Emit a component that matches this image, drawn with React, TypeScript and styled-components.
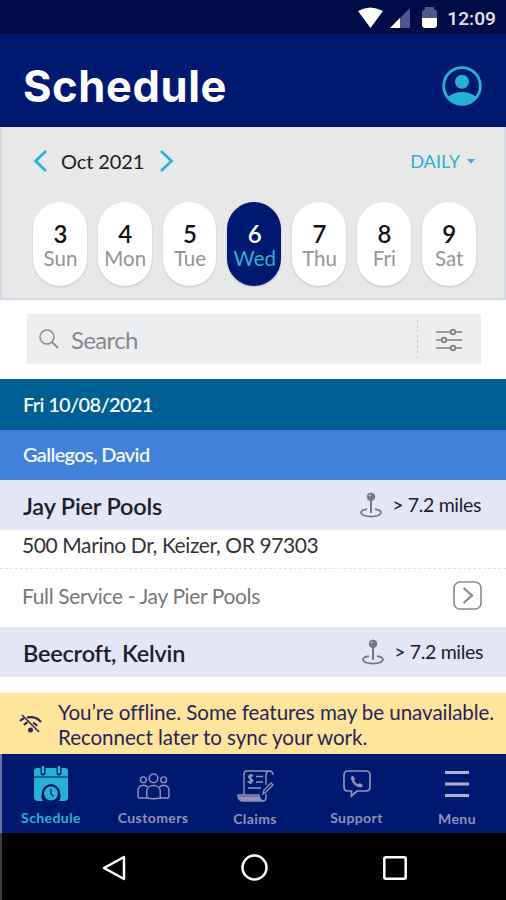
import React from "react";
import styled, { createGlobalStyle } from "styled-components";

const navy = "#001970";
const cyan = "#27b2d4";
const muted = "#9293b5";

const GlobalStyle = createGlobalStyle`
  * { box-sizing: border-box; }
  body { margin: 0; background: #fff; font-family: Lato, "Liberation Sans", sans-serif; }
  svg { display: block; flex: none; overflow: visible; }
`;

const Screen = styled.div`
  width: 506px;
  height: 900px;
  display: flex;
  flex-direction: column;
  overflow: hidden;
  background: #fff;
  white-space: nowrap;
`;

const StatusBar = styled.div`
  height: 34px;
  flex: none;
  padding: 2px 10px 0 0;
  background: #000c46;
  display: flex;
  align-items: center;
  justify-content: flex-end;
`;

const Clock = styled.span`
  margin: 2px 0 0 10px;
  color: #e4e5ee;
  font: 500 19.2px/24px Roboto, sans-serif;
`;

const Header = styled.header`
  height: 93px;
  flex: none;
  padding: 10px 24px 0 23px;
  background: ${navy};
  display: flex;
  align-items: center;
  justify-content: space-between;
`;

const Title = styled.h1`
  margin: 0;
  color: #fff;
  font: 700 43.5px/52px Inter, sans-serif;
  letter-spacing: 0.6px;
`;

const Calendar = styled.section`
  height: 173px;
  flex: none;
  background: #e8e8e8;
  border: solid #d3dae5;
  border-width: 0 2px 2px;
`;

const MonthBar = styled.div`
  height: 75px;
  padding: 0 29px 7px 31px;
  display: flex;
  align-items: center;
`;

const Month = styled.span`
  width: 84px;
  margin: 0 14px 1px 13px;
  color: #1b1b1b;
  font-size: 20px;
  line-height: 24px;
  letter-spacing: -0.1px;
`;

const ViewPicker = styled.span`
  margin-left: auto;
  display: flex;
  align-items: center;
  gap: 7px;
  color: ${cyan};
  font-size: 18.2px;
  line-height: 24px;
`;

const Days = styled.div`
  display: flex;
  gap: 10.9px;
  padding-left: 31px;
`;

const Day = styled.div<{ $active?: boolean }>`
  width: 53.9px;
  height: 84px;
  flex: none;
  border-radius: 27px;
  background: ${(p) => (p.$active ? navy : "#fff")};
  color: ${(p) => (p.$active ? cyan : "#949494")};
  box-shadow: 0 1px 2px rgba(0, 0, 0, 0.16);
  display: flex;
  flex-direction: column;
  align-items: center;
  padding: 19px 0 0 1px;
  font-size: 20.5px;
  line-height: 24px;
`;

const DayNumber = styled.b<{ $active?: boolean }>`
  color: ${(p) => (p.$active ? "#fff" : "#111")};
  font-size: 24px;
  font-weight: 600;
  line-height: 25px;
`;

const SearchArea = styled.div`
  height: 79px;
  flex: none;
  padding: 14px 25px 15px 27px;
`;

const SearchBox = styled.div`
  height: 50px;
  background: #edeef0;
  display: flex;
  align-items: center;
  padding: 0 19px 0 12px;
`;

const SearchLabel = styled.span`
  margin: 2px auto 0 12px;
  color: #85878a;
  font-size: 24px;
  line-height: 30px;
  letter-spacing: -0.65px;
`;

const Divider = styled.span`
  height: 38px;
  margin-right: 17px;
  border-left: 1px dashed #cfd1d3;
`;

const Band = styled.div<{ $light?: boolean }>`
  height: ${(p) => (p.$light ? 50 : 51)}px;
  flex: none;
  padding-left: 23px;
  background: ${(p) => (p.$light ? "#4082d8" : "#005f92")};
  color: #f1f7ff;
  font-size: 20px;
  font-weight: 600;
  line-height: ${(p) => (p.$light ? 49 : 51)}px;
  letter-spacing: -0.66px;
`;

const Customer = styled.div<{ $shift?: boolean }>`
  height: 50px;
  flex: none;
  padding: 0 ${(p) => (p.$shift ? 23 : 25)}px 0 23px;
  background: #e2e6f5;
  display: flex;
  align-items: center;
  color: #1b202b;
`;

const CustomerName = styled.span`
  margin: 2px auto 0 0;
  font-size: 23.5px;
  font-weight: 600;
  line-height: 30px;
  letter-spacing: -0.2px;
`;

const Distance = styled.span`
  margin: 0 0 0 10px;
  font-size: 19.5px;
  line-height: 26px;
  letter-spacing: -0.35px;
`;

const Address = styled.div`
  height: 39px;
  flex: none;
  padding-left: 22px;
  border-bottom: 1px dashed #e2e2e2;
  color: #333;
  font-size: 21px;
  line-height: 30px;
  letter-spacing: -0.4px;
`;

const Service = styled.div`
  height: 58px;
  flex: none;
  padding: 0 24px 5px 22px;
  display: flex;
  align-items: center;
  justify-content: space-between;
  color: #777;
  font-size: 21px;
  letter-spacing: -0.36px;
`;

const Notice = styled.div`
  height: 61px;
  flex: none;
  margin-top: 16px;
  padding-left: 19px;
  background: #fee59b;
  display: flex;
  align-items: center;
  color: #29235c;
`;

const NoticeText = styled.p`
  margin: 2px 0 0 16px;
  font-size: 20.6px;
  line-height: 25px;
  letter-spacing: -0.08px;
`;

const Nav = styled.nav`
  height: 79px;
  flex: none;
  padding-left: 1px;
  background: ${navy};
  border-left: 2px solid #6b76a5;
  display: grid;
  grid-template-columns: 96px 108px 96px 107px 94px;
`;

const NavItem = styled.div<{ $active?: boolean }>`
  display: flex;
  flex-direction: column;
  align-items: center;
  color: ${(p) => (p.$active ? cyan : muted)};
  font-size: 14px;
  font-weight: 700;
  line-height: 18px;
  letter-spacing: 0.4px;
`;

const NavIcon = styled.span<{ $drop?: number; $tall?: boolean }>`
  height: ${(p) => (p.$tall ? 56 : 55)}px;
  padding-top: ${(p) => p.$drop ?? 3}px;
  display: flex;
  align-items: center;
`;

const SystemBar = styled.div`
  height: 67px;
  flex: none;
  background: #000;
  border-left: 2px solid #3c3c3c;
  display: flex;
  align-items: center;
  padding: 2px 99px 0 100px;
  justify-content: space-between;
`;

const Arrow = ({ right }: { right?: boolean }) => (
  <svg width="15" height="22" viewBox="0 0 15 22" fill="none" stroke={cyan} strokeWidth="2.7">
    <path d={right ? "M2 1L12.500 11L2 21" : "M13 1L2.500 11L13 21"} />
  </svg>
);

const Pin = () => (
  <svg width="22" height="26" viewBox="0 0 22 26" fill="none" stroke="#74777f">
    <path d="M7 17.200C3 17.700 1 19 1 20.600C1 23 5.500 24.600 11 24.600S21 23 21 20.600C21 19 19 17.700 15 17.200" strokeWidth="1.700" />
    <path d="M11 8V21" strokeWidth="2" />
    <circle cx="11" cy="4.800" r="3.800" fill="#74777f" />
    <circle cx="9.800" cy="3.600" r="1" fill="#c3c6ce" stroke="none" />
  </svg>
);

const days = [
  ["3", "Sun"], ["4", "Mon"], ["5", "Tue"], ["6", "Wed"], ["7", "Thu"], ["8", "Fri"], ["9", "Sat"],
];

const ScheduleIcon = () => (
  <svg width="36" height="36" viewBox="0 0 36 36">
    <path d="M4 2H32Q35 2 35 5V31Q35 35 31 35H26A9 9 0 0 0 27 27A9 9 0 0 0 9 27A9 9 0 0 0 10 35H5Q1 35 1 31V5Q1 2 4 2Z" fill={cyan} />
    <path d="M1 11H35" stroke={navy} strokeWidth="1" />
    <path d="M10 1V7M26 1V7" stroke={navy} strokeWidth="5" strokeLinecap="round" />
    <path d="M10 1V6.500M26 1V6.500" stroke={cyan} strokeWidth="2.500" strokeLinecap="round" />
    <circle cx="18" cy="27.500" r="7" fill={cyan} />
    <path d="M18 23V28L20.500 30.500" fill="none" stroke={navy} strokeWidth="1.200" />
  </svg>
);

const CustomersIcon = () => (
  <svg width="33" height="27" viewBox="0 0 34 28" fill="none" stroke={muted} strokeWidth="1.500">
    <circle cx="17" cy="5.500" r="4.500" />
    <circle cx="6.500" cy="7" r="3" />
    <circle cx="27.500" cy="7" r="3" />
    <path d="M10 26V19C10 11 24 11 24 19V26Q17 27.500 10 26ZM10 26H3Q1 26 1 24V18C1 13 7 11 11 14.500M24 26H31Q33 26 33 24V18C33 13 27 11 23 14.500" />
  </svg>
);

const ClaimsIcon = () => (
  <svg width="37" height="32" viewBox="0 0 37 32" fill="none" stroke={muted} strokeWidth="1.400">
    <path d="M7 25V4Q7 1 10 1H32Q36 1 36 5M31 1Q29 2 29 6V15M7 25H1Q1 31 6 31H26Q29 31 29 27V24M7 25H22Q22 30 26 31" />
    <path d="M2 27H22L24 30H5Z" fill={muted} />
    <path d="M19 6.500H26M19 12H26M11 18H24M26 24L27 20L34 13L36 15L29 22Z" />
    <path d="M16 6C13 4 10.500 7 13 8.300S16.500 11 14.500 12S11 12 11 11M13.500 4V14" strokeWidth="1.800" />
  </svg>
);

const SupportIcon = () => (
  <svg width="28" height="28" viewBox="0 0 28 28" fill="none" stroke={muted} strokeWidth="1.700">
    <path d="M5 1H23Q27 1 27 5V17Q27 21 23 21H14L8.500 26V21H5Q1 21 1 17V5Q1 1 5 1Z" />
    <path d="M8 7L10 5.500L12 9L11 10.500Q12.500 13 15 14L17 13L20 15.500L18 17.500Q11 17.500 8 9Z" fill={muted} stroke="none" />
  </svg>
);

export default function App() {
  return (
    <>
      <GlobalStyle />
      <Screen>
        <StatusBar>
          <svg width="64" height="24" viewBox="0 0 64 24">
            <path d="M0 5Q12.500 -2 25 5L12.500 22Z" fill="#fff" />
            <path d="M32 22L52 2V22Z" fill="#515887" />
            <path d="M32 22L42 12V22Z" fill="#fff" />
          </svg>
          <svg width="15" height="24" viewBox="0 0 15 24">
            <path d="M0 5L3 3V1H12V3L15 5V12H0Z" fill="#515887" />
            <path d="M0 12H15V20L13 22H2L0 20Z" fill="#fff" />
          </svg>
          <Clock>12:09</Clock>
        </StatusBar>
        <Header>
          <Title>Schedule</Title>
          <svg width="40" height="40" viewBox="0 0 40 40">
            <circle cx="20" cy="20" r="18.300" fill="none" stroke={cyan} strokeWidth="2.800" />
            <circle cx="20" cy="15.700" r="7" fill={cyan} />
            <path d="M6 31Q12 26 20 26T34 31Q28 38 20 38T6 31Z" fill={cyan} />
          </svg>
        </Header>
        <Calendar>
          <MonthBar>
            <Arrow />
            <Month>Oct 2021</Month>
            <Arrow right />
            <ViewPicker>
              DAILY
              <svg width="8" height="5" viewBox="0 0 8 5"><path d="M0 0H8L4 4.500Z" fill={cyan} /></svg>
            </ViewPicker>
          </MonthBar>
          <Days>
            {days.map(([n, name]) => (
              <Day key={n} $active={n === "6"}>
                <DayNumber $active={n === "6"}>{n}</DayNumber>
                {name}
              </Day>
            ))}
          </Days>
        </Calendar>
        <SearchArea>
          <SearchBox>
            <svg width="20" height="21" viewBox="0 0 20 21" fill="none" stroke="#888b8e">
              <circle cx="8" cy="8" r="7" strokeWidth="1.500" />
              <path d="M13 13L19 19" strokeWidth="2" />
            </svg>
            <SearchLabel>Search</SearchLabel>
            <Divider />
            <svg width="27" height="22" viewBox="0 0 27 22" stroke="#7b7e81" strokeWidth="1.700" fill="#edeef0">
              <path d="M1 4H27M1 12H27M1 20H27" />
              <circle cx="18" cy="4" r="2.300" />
              <circle cx="9" cy="12" r="2.300" />
              <circle cx="18" cy="20" r="2.300" />
            </svg>
          </SearchBox>
        </SearchArea>
        <Band>Fri 10/08/2021</Band>
        <Band $light>Gallegos, David</Band>
        <Customer>
          <CustomerName>Jay Pier Pools</CustomerName>
          <Pin />
          <Distance>&gt; 7.2 miles</Distance>
        </Customer>
        <Address>500 Marino Dr, Keizer, OR 97303</Address>
        <Service>
          Full Service - Jay Pier Pools
          <svg width="29" height="29" viewBox="0 0 29 29" fill="none" stroke="#8a8a8a">
            <rect x="1" y="1" width="27" height="27" rx="6" strokeWidth="1.600" />
            <path d="M10.500 7L19 14.500L10.500 22" strokeWidth="2.300" />
          </svg>
        </Service>
        <Customer $shift>
          <CustomerName>Beecroft, Kelvin</CustomerName>
          <Pin />
          <Distance>&gt; 7.2 miles</Distance>
        </Customer>
        <Notice>
          <svg width="23" height="19" viewBox="0 0 23 19" fill="none" stroke="#29235c" strokeWidth="2.200">
            <path d="M1 7Q3 5 5 4.200M8 3.500Q17 2 22 8M5 11Q7 9 8.500 8.700M14 9Q17 9.500 18 12" />
            <path d="M3 1L20 18" strokeWidth="1.600" />
            <circle cx="11.500" cy="16" r="2.500" fill="#29235c" stroke="none" />
          </svg>
          <NoticeText>
            You’re offline. Some features may be unavailable.<br />Reconnect later to sync your work.
          </NoticeText>
        </Notice>
        <Nav>
          <NavItem $active><NavIcon $drop={4}><ScheduleIcon /></NavIcon>Schedule</NavItem>
          <NavItem><NavIcon $drop={9}><CustomersIcon /></NavIcon>Customers</NavItem>
          <NavItem><NavIcon $drop={7} $tall><ClaimsIcon /></NavIcon>Claims</NavItem>
          <NavItem><NavIcon $drop={4}><SupportIcon /></NavIcon>Support</NavItem>
          <NavItem>
            <NavIcon $tall>
              <svg width="24" height="28" viewBox="0 0 24 28" stroke="#b0b2cb" strokeWidth="3"><path d="M0 2.500H24M0 14H24M0 25.500H24" /></svg>
            </NavIcon>
            Menu
          </NavItem>
        </Nav>
        <SystemBar>
          <svg width="24" height="26" viewBox="0 0 24 26" fill="none" stroke="#fff" strokeWidth="2.500"><path d="M22 2L2 13L22 24Z" strokeLinejoin="round" /></svg>
          <svg width="27" height="27" viewBox="0 0 27 27" fill="none" stroke="#fff" strokeWidth="2.500"><circle cx="13.500" cy="13.500" r="12" /></svg>
          <svg width="24" height="24" viewBox="0 0 24 24" fill="none" stroke="#fff" strokeWidth="2.500"><rect x="1.300" y="1.300" width="21.400" height="21.400" rx="1.500" /></svg>
        </SystemBar>
      </Screen>
    </>
  );
}
